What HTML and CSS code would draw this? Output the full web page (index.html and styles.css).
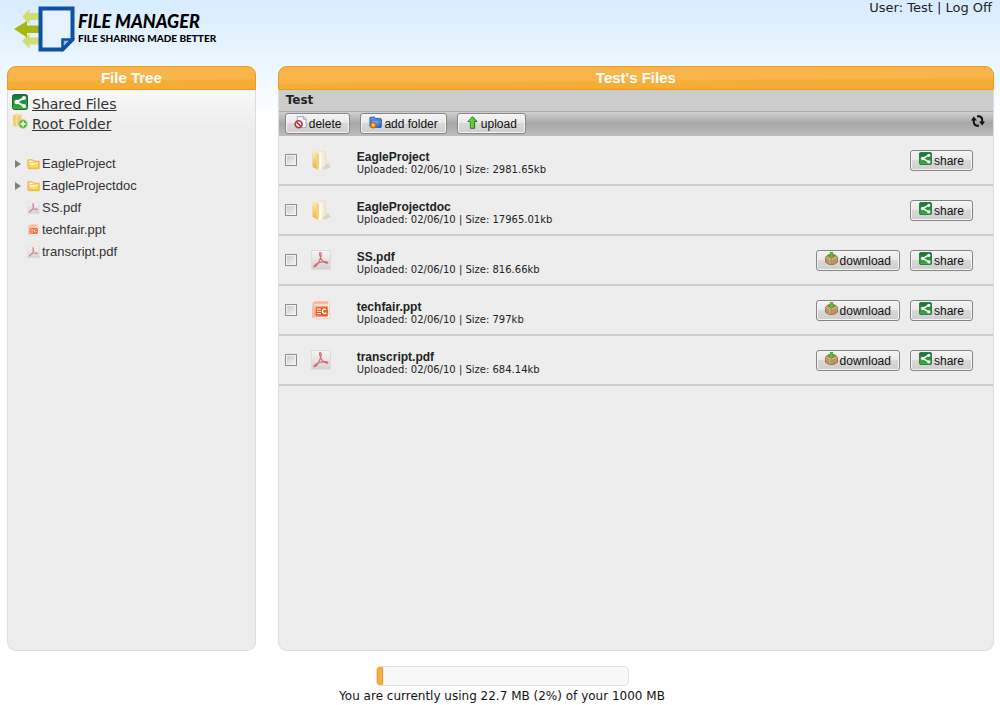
FILE: index.html
```html
<!DOCTYPE html>
<html lang="en">
<head>
<meta charset="utf-8">
<meta name="viewport" content="width=device-width, initial-scale=1">
<title>File Manager</title>
<link rel="stylesheet" href="styles.css">
</head>
<body>
<svg class="sprite" aria-hidden="true">
  <defs>
    <linearGradient id="g-green" x1="0" y1="0" x2="0" y2="1"><stop offset="0" stop-color="#17703a"/><stop offset="1" stop-color="#3fae3c"/></linearGradient>
    <linearGradient id="g-gold" x1="0" y1="0" x2="0" y2="1"><stop offset="0" stop-color="#fbeec4"/><stop offset="1" stop-color="#f0b63c"/></linearGradient>
    <linearGradient id="g-page" x1="0" y1="0" x2="1" y2="0"><stop offset="0" stop-color="#ffffff"/><stop offset="1" stop-color="#f2e6c4"/></linearGradient>
    <linearGradient id="g-pdf" x1="0" y1="0" x2="0" y2="1"><stop offset="0" stop-color="#f5f5f5"/><stop offset="1" stop-color="#d2d2d2"/></linearGradient>
    <linearGradient id="g-blue" x1="0" y1="0" x2="1" y2="1"><stop offset="0" stop-color="#a5ceff"/><stop offset="1" stop-color="#1550c4"/></linearGradient>
    <linearGradient id="g-ppt" x1="0" y1="0" x2="1" y2="1"><stop offset="0" stop-color="#f9b49a"/><stop offset="1" stop-color="#ef6a3a"/></linearGradient>
    <linearGradient id="g-up" x1="0" y1="0" x2="1" y2="0"><stop offset="0" stop-color="#8cf05a"/><stop offset="1" stop-color="#35a81e"/></linearGradient>
  </defs>
  <symbol id="i-share" viewBox="0 0 16 16"><rect x=".5" y=".5" width="15" height="15" rx="2" fill="url(#g-green)" stroke="#176b33"/><path d="M12 3.8 4.8 8l7.2 4.2" fill="none" stroke="#eefaf0" stroke-width="2"/><circle cx="12" cy="4" r="2" fill="#fff"/><circle cx="4.6" cy="8" r="2.2" fill="#fff"/><circle cx="12" cy="12" r="2" fill="#fff"/></symbol>
  <symbol id="i-root" viewBox="0 0 16 16"><path d="M1 1 5 0v13l-4-1z" fill="#efcf78"/><path d="M4 .5 10 0l.5 11L4 13z" fill="#f6dda0"/><path d="M5 2 9 1.500V9L5 10z" fill="#f1cd7d"/><circle cx="11" cy="10" r="4.200" fill="#4fb52b" stroke="#9fd47d"/><path d="M11 7.500v5M8.500 10h5" stroke="#fff" stroke-width="1.800"/></symbol>
  <symbol id="i-minifolder" viewBox="0 0 14 12"><path d="M1 10V1.500h5L7.500 3H13v8H1.500z" fill="#fbe58d" stroke="#eda72f"/><path d="M2 10.500 2.500 5h10v5.500z" fill="#ffd95a" stroke="#f3b845"/><path d="M3 5.500h9M3 6.500h5" stroke="#fffbe0"/><path d="M2.500 3h3" stroke="#fff"/></symbol>
  <symbol id="i-pdf" viewBox="0 0 20 20"><rect x=".5" y=".5" width="19" height="19" fill="url(#g-pdf)" stroke="#dcdcdc"/><path d="M9 2.500c1.800-.2 1.300 3.500-.1 7-1.200 3-3.900 7.500-5.600 7.200-1.200-.4 1.500-2.900 5.300-4.200 3.400-1.100 8.200-1.500 8.300.1 0 1.400-3.600.2-5.600-2C9.400 8.500 7.800 3 9 2.500z" fill="none" stroke="#d96a72" stroke-width="1.200"/></symbol>
  <symbol id="i-ppt" viewBox="0 0 22 22"><path d="M6 2 20 3 21 20 6 21z" fill="#fffaf7" stroke="#e9cfc4"/><path d="M1.500 5Q2 1.500 5 1.500L18.500 1v4L6 6 4 19.500H1z" fill="#f9b99f"/><path d="M3.500 5.500h14" stroke="#fde3d8" stroke-width="1.500"/><rect x="4" y="6.500" width="15" height="12" rx="2" fill="url(#g-ppt)"/><rect x="5.500" y="8" width="12.500" height="9" rx="1.500" fill="#e8541c"/><path d="M6.500 10H11M6.500 12.500H11M6.500 15H11" stroke="#ffe9df" stroke-width="1.500"/><path d="M16.600 10.700A2.400 2.400 0 1 0 16.800 14" fill="none" stroke="#fff" stroke-width="1.700"/></symbol>
  <symbol id="i-folder" viewBox="0 0 20 22"><path d="M12 18.500 17 14l3 4-7 3z" fill="#d4c8b2" opacity=".65"/><path d="M6 3 14 2l1 14-5 4-4-1z" fill="url(#g-page)" stroke="#e8dcb8" stroke-width=".7"/><path d="M1 1.500 5.500 3 6.500 20.500 1.500 18z" fill="url(#g-gold)"/><path d="M5.500 3.500 8 5v16l-2-1z" fill="#f6d37b"/><path d="m8 6 2-.5V20l-2 1z" fill="#fff"/></symbol>
  <symbol id="i-delete" viewBox="0 0 14 14"><path d="M3.500.5H10L13 3v9.500H3.500z" fill="#f7f9fd" stroke="#98a2c0"/><path d="M10 .5V3.500h3" fill="#dce2f0" stroke="#98a2c0"/><circle cx="5" cy="8.800" r="3.700" fill="#fff" stroke="#c4353b" stroke-width="1.800"/><path d="m2.600 6.300 4.900 5" stroke="#c4353b" stroke-width="1.700"/></symbol>
  <symbol id="i-addfolder" viewBox="0 0 14 14"><path d="M1 11V1.500L5.500 1 7 2.500l6 .5v9z" fill="#5b96ee" stroke="#2358b5"/><path d="M2 12 3 4.500h10.500L12.500 12.500z" fill="url(#g-blue)" stroke="#1c51ac" stroke-width=".7"/><circle cx="4.500" cy="9.800" r="3.200" fill="#f28b1f" stroke="#ad5512" stroke-width=".8"/><circle cx="4.500" cy="9.800" r="1.300" fill="#ffe18c"/></symbol>
  <symbol id="i-upload" viewBox="0 0 12 14"><path d="M6 .7 11 6H8.300v7.300H3.700V6H1z" fill="url(#g-up)" stroke="#237516"/></symbol>
  <symbol id="i-download" viewBox="0 0 14 14"><path d="M.5 5.500 3.500 3h7L13.500 5.500V11l-4 2.500h-5L.5 11z" fill="#bd9364" stroke="#8c6740" stroke-width=".8"/><path d="m.8 5.700 3.700 1.500h5L13.200 5.700" fill="none" stroke="#dcbc8e"/><path d="M5 7.500v5.500" stroke="#d9b684"/><path d="M5.700 0h2.600V3.500h2L7 7 3.700 3.500h2z" fill="#62c332" stroke="#358f1d" stroke-width=".7"/></symbol>
  <symbol id="i-refresh" viewBox="0 0 14 14"><path d="M6 2.200H7.500A3.700 3.700 0 0 1 11.200 6V8M8 11.800H6.500A3.700 3.700 0 0 1 2.800 8V6" fill="none" stroke="#111" stroke-width="2"/><path d="M8 7.500h6L11.200 11.500zM0 6.500h6L2.800 2.500z" fill="#111"/></symbol>
  <symbol id="i-logo" viewBox="0 0 62 46"><path d="M8 10.500 15.500 3v4H26v7H15.500v4zM8 35l7.500-7.500v4H26v7H15.500v4z" fill="#d0dd74"/><path d="M0 23 13 15v4.500h13v7.500H13v4.500z" fill="#a6b80c"/><path d="M26.500 2.500h32v31l-10 10h-22z" fill="#e6f3fe" stroke="#0b52a2" stroke-width="4"/><path d="M48.500 43V33.500H58z" fill="#9cb7de" stroke="#0b52a2" stroke-width="2.500"/></symbol>
</svg>

<header class="site-header">
  <div class="brand">
    <svg class="brand-mark" aria-hidden="true"><use href="#i-logo"/></svg>
    <div>
      <h1 class="brand-name">FILE MANAGER</h1>
      <p class="brand-tagline">FILE SHARING MADE BETTER</p>
    </div>
  </div>
  <p class="account">User: Test | <a class="log-off" href="#">Log Off</a></p>
</header>

<main class="workspace">
  <aside class="panel tree-panel">
    <h2 class="panel-title">File Tree</h2>
    <nav class="shortcuts">
      <a class="shortcut" href="#"><svg class="icon-16" aria-hidden="true"><use href="#i-share"/></svg><span class="shortcut-text">Shared Files</span></a>
      <a class="shortcut" href="#"><svg class="icon-16" aria-hidden="true"><use href="#i-root"/></svg><span class="shortcut-text">Root Folder</span></a>
    </nav>
    <ul class="tree">
      <li class="tree-item"><span class="arrow"></span><svg class="tree-icon" aria-hidden="true"><use href="#i-minifolder"/></svg><a href="#">EagleProject</a></li>
      <li class="tree-item"><span class="arrow"></span><svg class="tree-icon" aria-hidden="true"><use href="#i-minifolder"/></svg><a href="#">EagleProjectdoc</a></li>
      <li class="tree-item leaf"><svg class="tree-icon" aria-hidden="true"><use href="#i-pdf"/></svg><a href="#">SS.pdf</a></li>
      <li class="tree-item leaf"><svg class="tree-icon" aria-hidden="true"><use href="#i-ppt"/></svg><a href="#">techfair.ppt</a></li>
      <li class="tree-item leaf"><svg class="tree-icon" aria-hidden="true"><use href="#i-pdf"/></svg><a href="#">transcript.pdf</a></li>
    </ul>
  </aside>

  <section class="panel">
    <h2 class="panel-title">Test's Files</h2>
    <p class="path">Test</p>
    <div class="toolbar">
      <button class="btn" type="button"><svg class="btn-icon" aria-hidden="true"><use href="#i-delete"/></svg>delete</button>
      <button class="btn" type="button"><svg class="btn-icon" aria-hidden="true"><use href="#i-addfolder"/></svg>add folder</button>
      <button class="btn" type="button"><svg class="btn-icon" aria-hidden="true"><use href="#i-upload"/></svg>upload</button>
      <button class="refresh" type="button" aria-label="Refresh"><svg class="refresh-icon" aria-hidden="true"><use href="#i-refresh"/></svg></button>
    </div>
    <ul class="files">
      <li class="file">
        <input class="check" type="checkbox" id="f1"><svg class="file-icon" aria-hidden="true"><use href="#i-folder"/></svg>
        <div class="file-info"><label class="file-name" for="f1">EagleProject</label><p class="file-meta">Uploaded: 02/06/10 | Size: 2981.65kb</p></div>
        <button class="btn" type="button"><svg class="btn-icon" aria-hidden="true"><use href="#i-share"/></svg>share</button>
      </li>
      <li class="file">
        <input class="check" type="checkbox" id="f2"><svg class="file-icon" aria-hidden="true"><use href="#i-folder"/></svg>
        <div class="file-info"><label class="file-name" for="f2">EagleProjectdoc</label><p class="file-meta">Uploaded: 02/06/10 | Size: 17965.01kb</p></div>
        <button class="btn" type="button"><svg class="btn-icon" aria-hidden="true"><use href="#i-share"/></svg>share</button>
      </li>
      <li class="file">
        <input class="check" type="checkbox" id="f3"><svg class="file-icon" aria-hidden="true"><use href="#i-pdf"/></svg>
        <div class="file-info"><label class="file-name" for="f3">SS.pdf</label><p class="file-meta">Uploaded: 02/06/10 | Size: 816.66kb</p></div>
        <button class="btn" type="button"><svg class="btn-icon" aria-hidden="true"><use href="#i-download"/></svg>download</button>
        <button class="btn" type="button"><svg class="btn-icon" aria-hidden="true"><use href="#i-share"/></svg>share</button>
      </li>
      <li class="file">
        <input class="check" type="checkbox" id="f4"><svg class="file-icon" aria-hidden="true"><use href="#i-ppt"/></svg>
        <div class="file-info"><label class="file-name" for="f4">techfair.ppt</label><p class="file-meta">Uploaded: 02/06/10 | Size: 797kb</p></div>
        <button class="btn" type="button"><svg class="btn-icon" aria-hidden="true"><use href="#i-download"/></svg>download</button>
        <button class="btn" type="button"><svg class="btn-icon" aria-hidden="true"><use href="#i-share"/></svg>share</button>
      </li>
      <li class="file">
        <input class="check" type="checkbox" id="f5"><svg class="file-icon" aria-hidden="true"><use href="#i-pdf"/></svg>
        <div class="file-info"><label class="file-name" for="f5">transcript.pdf</label><p class="file-meta">Uploaded: 02/06/10 | Size: 684.14kb</p></div>
        <button class="btn" type="button"><svg class="btn-icon" aria-hidden="true"><use href="#i-download"/></svg>download</button>
        <button class="btn" type="button"><svg class="btn-icon" aria-hidden="true"><use href="#i-share"/></svg>share</button>
      </li>
    </ul>
  </section>
</main>

<footer class="usage">
  <div class="meter" role="progressbar" aria-label="Storage used" aria-valuenow="2" aria-valuemin="0" aria-valuemax="100"><div class="meter-fill" style="width: 2.27%"></div></div>
  <p class="usage-text">You are currently using 22.7 MB (2%) of your 1000 MB</p>
</footer>
</body>
</html>
```

FILE: styles.css
```css
* { box-sizing: border-box; }

body {
  margin: 0;
  min-height: 100vh;
  display: flex;
  flex-direction: column;
  background: #fff linear-gradient(#d6ecff, #fff 120px) no-repeat;
  font-family: "DejaVu Sans", Verdana, sans-serif;
  font-size: 12px;
  line-height: 16px;
  color: #222;
}

h1, h2, p, ul { margin: 0; padding: 0; }
ul { list-style: none; }
a { color: inherit; text-decoration: none; }
svg { display: block; flex: none; }
.sprite { position: absolute; width: 0; height: 0; }

.site-header {
  display: flex;
  justify-content: space-between;
  align-items: flex-start;
  min-height: 66px;
  padding: 0 8px 0 14px;
}
.brand { display: flex; align-items: flex-start; gap: 2px; padding-top: 6px; }
.brand-mark { width: 62px; height: 46px; }
.brand-name {
  padding-top: 4px;
  font: italic 900 18px/22px Lato, sans-serif;
  color: #000;
}
.brand-tagline { font: 900 10px/12px Lato, sans-serif; color: #000; }
.account { font-size: 13px; }

.workspace {
  flex: 1;
  display: grid;
  grid-template-columns: minmax(200px, 25fr) minmax(0, 72fr);
  gap: 22px;
  padding: 0 6px 0 7px;
}
.panel {
  border: 1px solid #ddd;
  border-top: 0;
  border-radius: 9px;
  background: linear-gradient(#f8f8f8 24px, #ededed 60px);
}
.panel-title {
  margin: 0 -1px;
  height: 24px;
  border: 1px solid #ed9a1c;
  border-radius: 9px 9px 0 0;
  background: linear-gradient(179.5deg, #f7b54c 55%, #f6ad35 65%);
  font: bold 15px/21px "Liberation Sans", Arial, sans-serif;
  text-align: center;
  color: #fff;
}

.shortcuts { padding: 4px 4px 0; }
.shortcut { display: flex; align-items: flex-start; gap: 4px; height: 20px; color: #333; }
.shortcut-text { font-size: 14px; line-height: 20px; text-decoration: underline; }
.icon-16 { width: 16px; height: 16px; }

.tree { padding: 19px 0 0 7px; font: 13px/22px "Liberation Sans", Arial, sans-serif; color: #333; }
.tree-item { display: flex; align-items: center; gap: 2px; }
.arrow {
  width: 6px;
  height: 8px;
  margin-right: 4px;
  border: solid transparent;
  border-width: 4px 0 4px 6px;
  border-left-color: #808080;
}
.leaf { padding-left: 12px; }
.tree-icon { width: 13px; height: 12px; }

.path {
  height: 21px;
  padding-left: 7px;
  background: #ccc;
  font-weight: bold;
  font-size: 12px;
  line-height: 20px;
}
.toolbar {
  display: flex;
  align-items: center;
  gap: 10px;
  height: 25px;
  padding: 0 8px 0 6px;
  border-top: 1px solid #aaa;
  border-bottom: 1px solid #bbb;
  background: linear-gradient(#d0d0d0, #a6a6a6 50%, #bbb);
}
.btn {
  display: flex;
  align-items: center;
  gap: 2px;
  height: 21px;
  margin: 0;
  padding: 1px 8px 0;
  border: 1px solid #858585;
  border-radius: 3px;
  background: linear-gradient(#f4f4f4, #e8e8e8 50%, #d8d8d8 50%, #cfcfcf);
  box-shadow: inset 0 0 0 1px #f5f5f5;
  font: 12px/20px "Liberation Sans", Arial, sans-serif;
  color: #111;
}
.btn-icon { width: 13px; height: 13px; margin-bottom: 4px; }
.refresh { margin: 0 0 6px auto; padding: 0; border: 0; background: none; }
.refresh-icon { width: 14px; height: 14px; }

.files { background: #ededed; }
.file {
  display: flex;
  align-items: center;
  gap: 10px;
  height: 50px;
  padding: 0 20px 0 6px;
  border-bottom: 2px solid #ccc;
}
.check {
  appearance: none;
  width: 12px;
  height: 12px;
  margin: 0 4px 0 0;
  border: 1px solid #8e8f8f;
  background: linear-gradient(135deg, #c5cace, #f6f6f6);
  box-shadow: inset 0 0 0 1px #f2f2f2;
}
.file-icon { width: 20px; height: 22px; }
.file-info { flex: 1; padding: 5px 0 0 16px; }
.file-name { display: block; font: bold 12px/14px "Liberation Sans", Arial, sans-serif; }
.file-meta { font-size: 10px; line-height: 12px; }

.usage {
  display: flex;
  flex-direction: column;
  align-items: center;
  gap: 2px;
  min-height: 54px;
  padding: 15px 0 0 4px;
}
.meter {
  width: 253px;
  height: 20px;
  border: 1px solid #e3e3e3;
  border-radius: 4px;
  background: #f8f8f8;
}
.meter-fill {
  height: 18px;
  min-width: 6px;
  border: 1px solid #ed9a1c;
  border-radius: 3px 0 0 3px;
  background: #f6b043;
}
.usage-text { font-size: 12px; color: #111; }
```
